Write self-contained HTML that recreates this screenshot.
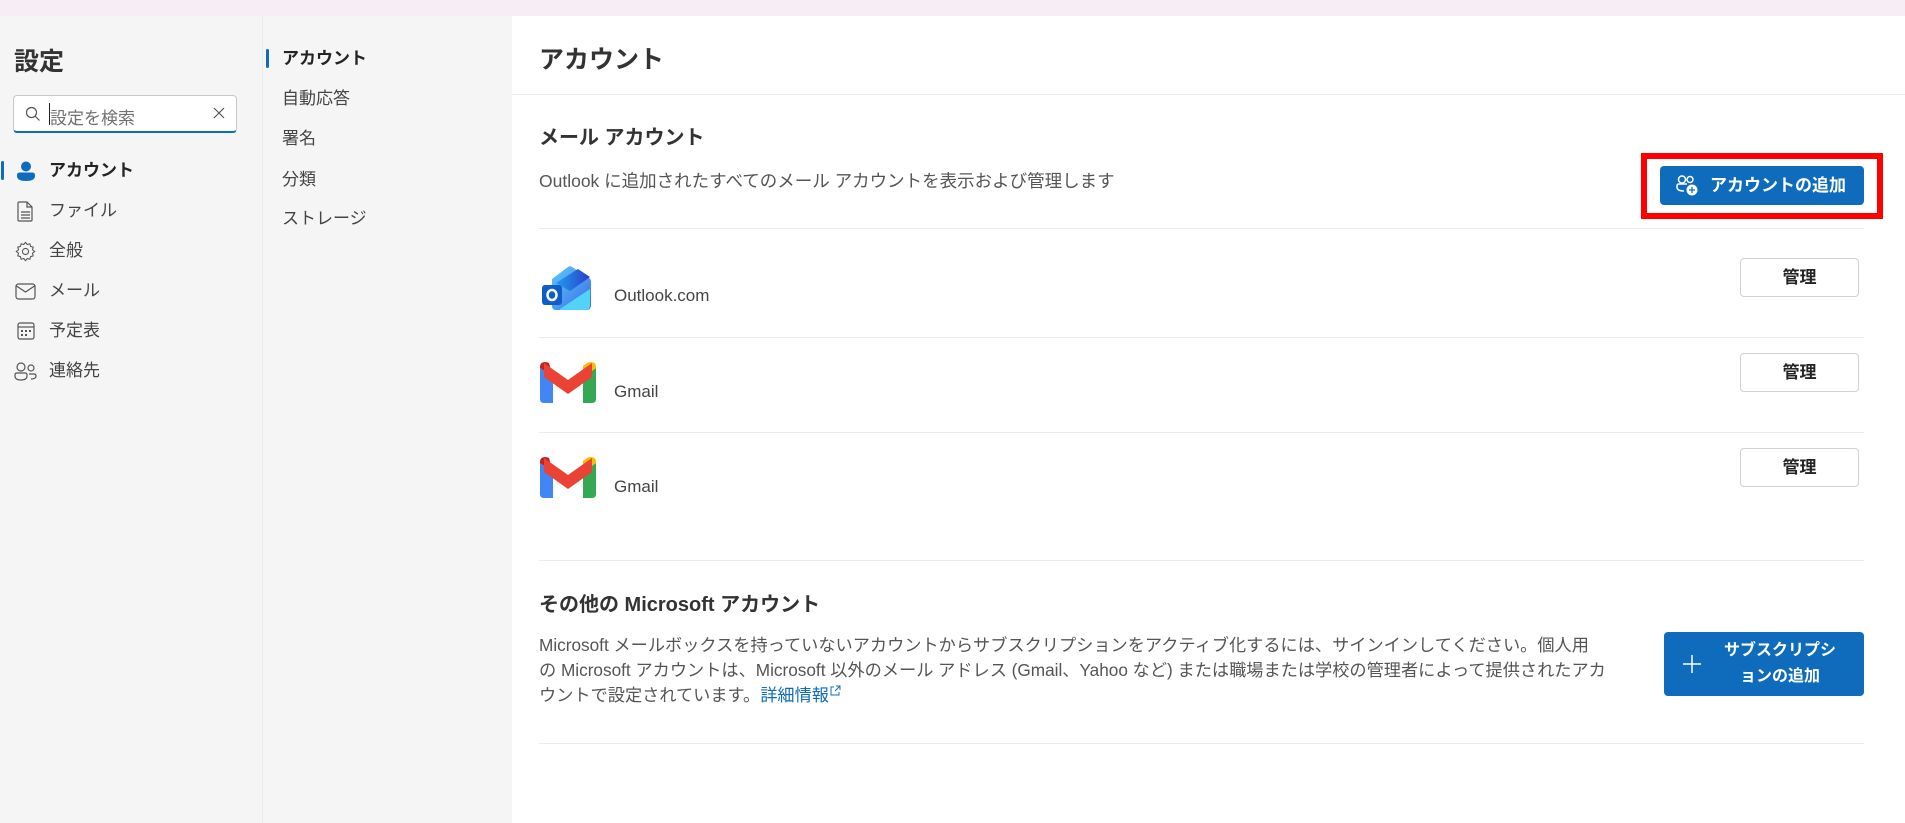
<!DOCTYPE html>
<html><head><meta charset="utf-8">
<style>
*{margin:0;padding:0;box-sizing:border-box}
body{width:1905px;height:823px;overflow:hidden;background:#fff;font-family:"Liberation Sans","Noto Sans CJK JP",sans-serif;color:#242424;position:relative}
.a{position:absolute;white-space:nowrap}
.top{left:0;top:0;width:1905px;height:16px;background:#f7eef5}
.nav1{left:0;top:16px;width:262px;height:807px;background:#f5f5f5}
.nav2{left:262px;top:16px;width:250px;height:807px;background:#f5f5f5;border-left:1px solid #ebebeb}
.t1{font-size:17px;line-height:20px}
.sep{height:1px;background:#ebebeb}
.mg{width:119px;height:39px;border:1px solid #d1d1d1;border-radius:4px;background:#fff;font-size:17px;font-weight:bold;text-align:center;line-height:37px}
</style></head><body>
<div class="a top"></div>
<div class="a nav1"></div>
<div class="a nav2"></div>

<div class="a" style="left:14px;top:42px;font-size:25px;font-weight:bold;color:#333">設定</div>
<div class="a" style="left:13px;top:95px;width:224px;height:38px;background:#fff;border:1px solid #c8c8c8;border-bottom:2px solid #0f6cbd;border-radius:4px"></div>
<svg class="a" style="left:25px;top:106px" width="16" height="16" viewBox="0 0 16 16"><circle cx="6.5" cy="6.5" r="5" fill="none" stroke="#555" stroke-width="1.2"/><path d="M10 10l4.5 4.5" stroke="#555" stroke-width="1.2"/></svg>
<div class="a" style="left:49px;top:103px;width:1px;height:22px;background:#222"></div>
<div class="a" style="left:50px;top:104px;font-size:17px;color:#707070">設定を検索</div>
<svg class="a" style="left:212px;top:106px" width="14" height="14" viewBox="0 0 14 14"><path d="M2 2l10 10M12 2L2 12" stroke="#555" stroke-width="1.2"/></svg>

<div class="a" style="left:1px;top:161px;width:3px;height:19px;background:#0f6cbd;border-radius:2px"></div>
<svg class="a" style="left:16px;top:161px" width="20" height="21" viewBox="0 0 20 21"><circle cx="10" cy="5.5" r="5" fill="#0f6cbd"/><path d="M1 14q0-2.5 3-2.5h12q3 0 3 2.5v1q0 5-9 5t-9-5z" fill="#0f6cbd"/></svg>
<div class="a t1" style="left:49px;top:161px;font-weight:bold">アカウント</div>
<svg class="a" style="left:17px;top:201px" width="17" height="21" viewBox="0 0 17 21"><path d="M2 1h8l5 5v13a1 1 0 0 1-1 1H2a1 1 0 0 1-1-1V2a1 1 0 0 1 1-1zM10 1v5h5M4 11h9M4 14h9M4 17h9" fill="none" stroke="#555" stroke-width="1.2"/></svg>
<div class="a t1" style="left:49px;top:201px;color:#444">ファイル</div>
<svg class="a" style="left:15px;top:241px" width="21" height="21" viewBox="0 0 24 24"><path d="M12 1.5l2 2.5 3-.8.8 3 3 .8-.8 3 2.5 2-2.5 2 .8 3-3 .8-.8 3-3-.8-2 2.5-2-2.5-3 .8-.8-3-3-.8.8-3L1.5 12 4 10l-.8-3 3-.8.8-3 3 .8z" fill="none" stroke="#555" stroke-width="1.2"/><circle cx="12" cy="12" r="3.5" fill="none" stroke="#555" stroke-width="1.2"/></svg>
<div class="a t1" style="left:49px;top:241px;color:#444">全般</div>
<svg class="a" style="left:15px;top:283px" width="21" height="17" viewBox="0 0 21 17"><rect x="1" y="1" width="19" height="15" rx="2.5" fill="none" stroke="#555" stroke-width="1.2"/><path d="M1.5 3l9 6 9-6" fill="none" stroke="#555" stroke-width="1.2"/></svg>
<div class="a t1" style="left:49px;top:281px;color:#444">メール</div>
<svg class="a" style="left:17px;top:322px" width="18" height="18" viewBox="0 0 18 18"><rect x="1" y="1" width="16" height="16" rx="2" fill="none" stroke="#555" stroke-width="1.2"/><path d="M1 5h16" stroke="#555" stroke-width="1.2"/><g fill="#555"><rect x="4" y="8" width="2" height="2"/><rect x="8" y="8" width="2" height="2"/><rect x="12" y="8" width="2" height="2"/><rect x="4" y="12" width="2" height="2"/><rect x="8" y="12" width="2" height="2"/></g></svg>
<div class="a t1" style="left:49px;top:321px;color:#444">予定表</div>
<svg class="a" style="left:14px;top:362px" width="23" height="19" viewBox="0 0 23 19"><circle cx="7" cy="5" r="4" fill="none" stroke="#555" stroke-width="1.2"/><circle cx="17" cy="6" r="3" fill="none" stroke="#555" stroke-width="1.2"/><path d="M1 13q0-2 2-2h8q2 0 2 2v1q0 4-6 4t-6-4zM15 12h5q2 0 2 2q0 3-5 3" fill="none" stroke="#555" stroke-width="1.2"/></svg>
<div class="a t1" style="left:49px;top:361px;color:#444">連絡先</div>

<div class="a" style="left:266px;top:49px;width:3px;height:19px;background:#0f6cbd;border-radius:2px"></div>
<div class="a t1" style="left:282px;top:49px;font-weight:bold">アカウント</div>
<div class="a t1" style="left:282px;top:89px;color:#444">自動応答</div>
<div class="a t1" style="left:282px;top:129px;color:#444">署名</div>
<div class="a t1" style="left:282px;top:170px;color:#444">分類</div>
<div class="a t1" style="left:282px;top:209px;color:#444">ストレージ</div>

<div class="a" style="left:539px;top:40px;font-size:25px;font-weight:bold;color:#333">アカウント</div>
<div class="a sep" style="left:512px;top:94px;width:1393px"></div>
<div class="a" style="left:539px;top:121px;font-size:20px;font-weight:bold;color:#333">メール アカウント</div>
<div class="a" style="left:539px;top:168px;font-size:17.5px;color:#555">Outlook に追加されたすべてのメール アカウントを表示および管理します</div>
<div class="a" style="left:1641px;top:153px;width:242px;height:66px;border:6px solid #f00"></div>
<div class="a" style="left:1660px;top:166px;width:204px;height:39px;background:#0f6cbd;border-radius:4px;color:#fff;font-size:17px;font-weight:bold;line-height:39px;padding-left:50px">アカウントの追加</div>
<svg class="a" style="left:1676px;top:175px" width="24" height="22" viewBox="0 0 24 22"><circle cx="6" cy="4.5" r="3.5" fill="none" stroke="#fff" stroke-width="1.5"/><circle cx="14" cy="4.5" r="3" fill="none" stroke="#fff" stroke-width="1.5"/><path d="M1 11q0-2 2-2h8M1 11v1q0 4 7 4" fill="none" stroke="#fff" stroke-width="1.5"/><circle cx="16" cy="15" r="5.5" fill="#fff"/><path d="M16 12v6M13 15h6" stroke="#0f6cbd" stroke-width="1.3"/></svg>

<div class="a sep" style="left:539px;top:228px;width:1325px"></div>
<svg class="a" style="left:542px;top:265px" width="50" height="46" viewBox="0 0 50 46"><defs><linearGradient id="g1" x1="0" y1="0" x2="1" y2="1"><stop offset="0" stop-color="#5ec8f8"/><stop offset="1" stop-color="#3a6ee8"/></linearGradient><linearGradient id="g2" x1="0" y1="0" x2="1" y2="0"><stop offset="0" stop-color="#1f9ef0"/><stop offset="1" stop-color="#2b3ec9"/></linearGradient></defs><path d="M10 14L26 2q2-1.5 4 0l16 10q3 2 3 5v23q0 5-5 5H14q-4 0-4-4z" fill="url(#g1)"/><path d="M14 18l22-14 12 8-20 14z" fill="url(#g2)"/><path d="M18 44l30-20v16q0 5-5 5H18z" fill="#52d4f8"/><rect x="0" y="20" width="20" height="20" rx="3" fill="#0f5ec7"/><ellipse cx="10" cy="30" rx="4.5" ry="5" fill="none" stroke="#fff" stroke-width="2.5"/></svg>
<div class="a" style="left:614px;top:286px;font-size:17px;color:#444">Outlook.com</div>
<div class="a mg" style="left:1740px;top:258px">管理</div>

<div class="a sep" style="left:539px;top:337px;width:1325px"></div>
<svg class="a" style="left:540px;top:362px" width="56" height="41" viewBox="0 0 56 41"><path d="M0 6v31q0 4 4 4h9V15z" fill="#4285f4"/><path d="M43 15v26h9q4 0 4-4V6z" fill="#34a853"/><path d="M43 4v11l13-9V5q0-5-5-5-2 0-4 1z" fill="#fbbc04"/><path d="M13 15L0 6V5q0-5 5-5 2 0 4 1z" fill="#c5221f"/><path d="M4 1l24 17L52 1v14L28 32 4 15z" fill="#ea4335"/></svg>
<div class="a" style="left:614px;top:382px;font-size:17px;color:#444">Gmail</div>
<div class="a mg" style="left:1740px;top:353px">管理</div>

<div class="a sep" style="left:539px;top:432px;width:1325px"></div>
<svg class="a" style="left:540px;top:457px" width="56" height="41" viewBox="0 0 56 41"><path d="M0 6v31q0 4 4 4h9V15z" fill="#4285f4"/><path d="M43 15v26h9q4 0 4-4V6z" fill="#34a853"/><path d="M43 4v11l13-9V5q0-5-5-5-2 0-4 1z" fill="#fbbc04"/><path d="M13 15L0 6V5q0-5 5-5 2 0 4 1z" fill="#c5221f"/><path d="M4 1l24 17L52 1v14L28 32 4 15z" fill="#ea4335"/></svg>
<div class="a" style="left:614px;top:477px;font-size:17px;color:#444">Gmail</div>
<div class="a mg" style="left:1740px;top:448px">管理</div>

<div class="a sep" style="left:539px;top:560px;width:1325px"></div>
<div class="a" style="left:539px;top:588px;font-size:20px;font-weight:bold;color:#333">その他の Microsoft アカウント</div>
<div class="a" style="left:539px;top:633px;font-size:17.2px;line-height:25px;color:#555">Microsoft メールボックスを持っていないアカウントからサブスクリプションをアクティブ化するには、サインインしてください。個人用<br>の Microsoft アカウントは、Microsoft 以外のメール アドレス (Gmail、Yahoo など) または職場または学校の管理者によって提供されたアカ<br>ウントで設定されています。<span style="color:#0f6cbd">詳細情報<svg width="12" height="12" viewBox="0 0 12 12" style="vertical-align:4px"><path d="M5 2H2v8h8V7M7 1h4v4M11 1L6 6" fill="none" stroke="#0f6cbd" stroke-width="1"/></svg></span></div>
<div class="a" style="left:1664px;top:632px;width:200px;height:64px;background:#0f6cbd;border-radius:4px"></div>
<svg class="a" style="left:1682px;top:654px" width="20" height="20" viewBox="0 0 20 20"><path d="M10 1v18M1 10h18" stroke="#fff" stroke-width="1.5"/></svg>
<div class="a" style="left:1718px;top:638px;width:124px;text-align:center;white-space:normal;color:#fff;font-size:16px;font-weight:bold;line-height:26px">サブスクリプションの追加</div>
<div class="a sep" style="left:539px;top:743px;width:1325px"></div>
</body></html>
